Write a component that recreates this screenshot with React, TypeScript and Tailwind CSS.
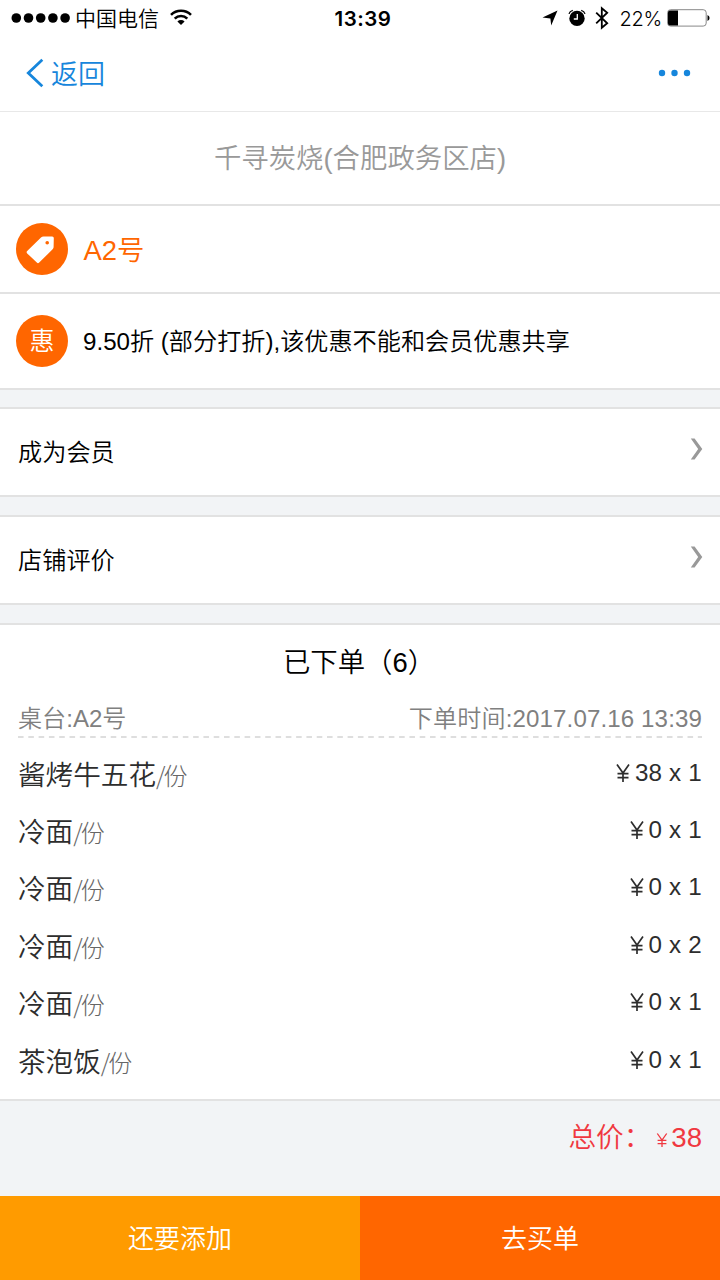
import React from "react";

const items = [
  { name: "酱烤牛五花", price: 38, count: 1 },
  { name: "冷面", price: 0, count: 1 },
  { name: "冷面", price: 0, count: 1 },
  { name: "冷面", price: 0, count: 2 },
  { name: "冷面", price: 0, count: 1 },
  { name: "茶泡饭", price: 0, count: 1 },
];

function StatusBar() {
  return (
    <div className="grid h-9 grid-cols-3 items-center pl-[11px] pr-[10px] text-black">
      <div className="flex items-center">
        <svg width="60" height="12" viewBox="0 0 60 12" fill="currentColor">
          {[5.3, 17.5, 29.7, 41.9, 54.1].map((x) => (
            <circle key={x} cx={x} cy="6" r="4.8" />
          ))}
        </svg>
        <span className="ml-1 whitespace-nowrap pt-0.5 text-[21px] leading-8">中国电信</span>
        <svg className="mb-0.5 ml-[11px]" width="22" height="18" viewBox="0 0 22 18" fill="none" stroke="currentColor" strokeWidth="2.6">
          <path d="M1 6.8a14.2 14.2 0 0 1 20 0" />
          <path d="M4.7 10.6a9 9 0 0 1 12.6 0" />
          <path d="M11 17 7.4 13.4a5.1 5.1 0 0 1 7.2 0Z" fill="currentColor" stroke="none" />
        </svg>
      </div>
      <div className="pl-[5px] pt-0.5 text-center font-['Inter','Noto_Sans_CJK_SC',sans-serif] text-[20.5px] font-semibold leading-8 tracking-[0.5px]">13:39</div>
      <div className="flex items-center justify-end">
        <svg width="16" height="16" viewBox="0 0 16 16" fill="currentColor">
          <path d="M15.5 .5 9.2 15.5 8.4 8.4 .5 7.4Z" />
        </svg>
        <svg className="ml-[10px]" width="18" height="18" viewBox="0 0 18 18" fill="currentColor">
          <circle cx="9" cy="9.4" r="7.7" />
          <path d="M1 4.9Q1.8 2 4.8 1.3M17 4.9Q16.2 2 13.2 1.3" stroke="currentColor" strokeWidth="1.3" fill="none" />
          <path d="M9.3 5v5H5.8" stroke="white" strokeWidth="1.3" fill="none" />
        </svg>
        <svg className="ml-[9px]" width="14" height="24" viewBox="0 0 14 24" fill="none" stroke="currentColor" strokeWidth="1.8">
          <path d="m1.2 6.7 11 10.6L6.8 21.8V2.2l5.4 4.5-11 10.6" />
        </svg>
        <span className="ml-[11px] pt-px font-['Inter','Noto_Sans_CJK_SC',sans-serif] text-[20px] leading-8 tracking-[-0.3px]">22%</span>
        <svg className="ml-[5px]" width="43" height="18" viewBox="0 0 43 18">
          <rect x=".6" y=".7" width="38.6" height="16.4" rx="3" fill="none" stroke="#888" strokeWidth="1" />
          <path d="M3 1.5h8v15H3a2 2 0 0 1-2-2v-11a2 2 0 0 1 2-2Z" />
          <path d="M40.5 6a3.2 3.2 0 0 1 0 6Z" />
        </svg>
      </div>
    </div>
  );
}

function LinkRow({ label }: { label: string }) {
  return (
    <a className="flex h-[90px] items-center justify-between border-y-2 border-[#e2e2e2] bg-white pl-[18px] pr-[17px]">
      <span className="pt-px text-[24.2px] leading-8 text-black">{label}</span>
      <svg className="mb-[7px]" width="13" height="22" viewBox="0 0 13 22" fill="#999">
        <path d="M.8.5h3.8L12.3 11l-7.7 10.5H.8L8.2 11Z" />
      </svg>
    </a>
  );
}

export default function App() {
  return (
    <div className="flex h-[1280px] w-[720px] flex-col overflow-hidden bg-[#f2f4f6] font-['Liberation_Sans','Noto_Sans_CJK_SC',sans-serif] font-[350]">
      <header className="h-28 shrink-0 border-b border-[#e8e8e8] bg-white">
        <StatusBar />
        <div className="flex h-[74px] items-center justify-between pl-[26px] pr-[29px] text-[#1686dc]">
          <button className="flex items-center">
            <svg width="18" height="30" viewBox="0 0 18 30" fill="none" stroke="currentColor" strokeWidth="2.8">
              <path d="M16.3 1.8 2.3 15l14 13.2" />
            </svg>
            <span className="ml-[7px] pt-[3px] text-[27px] leading-9">返回</span>
          </button>
          <svg width="33" height="8" viewBox="0 0 33 8" fill="currentColor">
            <circle cx="4" cy="4" r="3.2" />
            <circle cx="16.5" cy="4" r="3.2" />
            <circle cx="29" cy="4" r="3.2" />
          </svg>
        </div>
      </header>

      <h1 className="flex h-[94px] shrink-0 items-center justify-center border-b-2 border-[#e2e2e2] bg-white pt-0.5 text-[27.4px] text-[#999]">
        千寻炭烧(合肥政务区店)
      </h1>

      <div className="flex h-[88px] shrink-0 items-center border-b-2 border-[#e2e2e2] bg-white pl-4">
        <svg width="52" height="52" viewBox="0 0 52 52">
          <circle cx="26" cy="26" r="26" fill="#ff6600" />
          <path d="M27.6 13.6 36.2 13.4Q37.8 13.4 37.8 15L37.6 24.2Q37.5 25.4 36.6 26.3L23.2 39.6Q22 40.8 20.8 39.6L11.2 30.4Q10 29.2 11.2 28L25 14.6Q26 13.7 27.6 13.6Z" fill="white" />
          <circle cx="31.2" cy="19.8" r="1.8" fill="#ff6600" />
        </svg>
        <span className="ml-[15.5px] pt-[3px] text-[27.4px] leading-9 text-[#ff6600]">A2号</span>
      </div>

      <div className="flex h-24 shrink-0 items-center border-b-2 border-[#e2e2e2] bg-white pl-4">
        <div className="flex size-[52px] items-center justify-center rounded-full bg-[#ff6600] text-[25px] leading-none text-white">惠</div>
        <span className="ml-[15px] pt-0.5 text-[24.15px] leading-8 text-black">9.50折 (部分打折),该优惠不能和会员优惠共享</span>
      </div>

      <nav className="mt-[17px] flex shrink-0 flex-col gap-[18px]">
        <LinkRow label="成为会员" />
        <LinkRow label="店铺评价" />
      </nav>

      <section className="mt-[18px] flex h-[478px] shrink-0 flex-col border-y-2 border-[#e2e2e2] bg-white px-[18px]">
        <h2 className="flex h-[74px] items-center justify-center pr-0.5 pt-0.5 text-[27.4px] text-black">已下单（6）</h2>
        <div className="flex h-[38px] items-center justify-between pt-0.5 text-[24.1px] leading-8 text-[#808080]">
          <span>桌台:A2号</span>
          <span className="tracking-[0.12px]">下单时间:2017.07.16 13:39</span>
        </div>
        <svg className="-mt-px block" width="684" height="2" viewBox="0 0 684 2">
          <path d="M0 1h684" stroke="#d4d4d4" strokeWidth="1.5" strokeDasharray="5.6 4.7" />
        </svg>
        <ul className="mt-[9px] flex flex-col">
          {items.map((item, i) => (
            <li key={i} className="flex h-[57.4px] items-center justify-between text-[#2d2d2d]">
              <span className="text-[27.6px] leading-9">
                {item.name}
                <span className="text-[24px] font-light text-[#666]">
                  <span className="-mr-0.5 font-['Noto_Sans_CJK_SC',sans-serif]">/</span>份
                </span>
              </span>
              <span className="flex items-center pb-1.5 text-[24.2px] leading-8">
                <svg className="mr-[5px]" width="14" height="18" viewBox="0 0 14 18" fill="none" stroke="currentColor" strokeWidth="1.7">
                  <path d="M1 .5 7 9l6-8.5M7 9v9M1.5 9.6h11M1.5 13.6h11" />
                </svg>
                <span className="tracking-[0.2px]">{item.price} x {item.count}</span>
              </span>
            </li>
          ))}
        </ul>
      </section>

      <div className="flex h-[95px] shrink-0 items-baseline justify-end pr-[18px] pt-[19px] text-[27.6px] leading-9 text-[#f03840]">
        <span>总价：</span>
        <svg className="ml-[5px] mr-[3px]" width="12" height="14" viewBox="0 0 12 14" fill="none" stroke="currentColor" strokeWidth="1.3">
          <path d="M1.3.5 6 7.2 10.7.5M6 7.2V14M1.6 7.4h8.8M1.6 10.6h8.8" />
        </svg>
        <span>38</span>
      </div>

      <footer className="grid h-[84px] shrink-0 grid-cols-2 text-[26px] text-white">
        <button className="bg-[#ff9b00] pt-0.5">还要添加</button>
        <button className="bg-[#ff6600] pt-0.5">去买单</button>
      </footer>
    </div>
  );
}
